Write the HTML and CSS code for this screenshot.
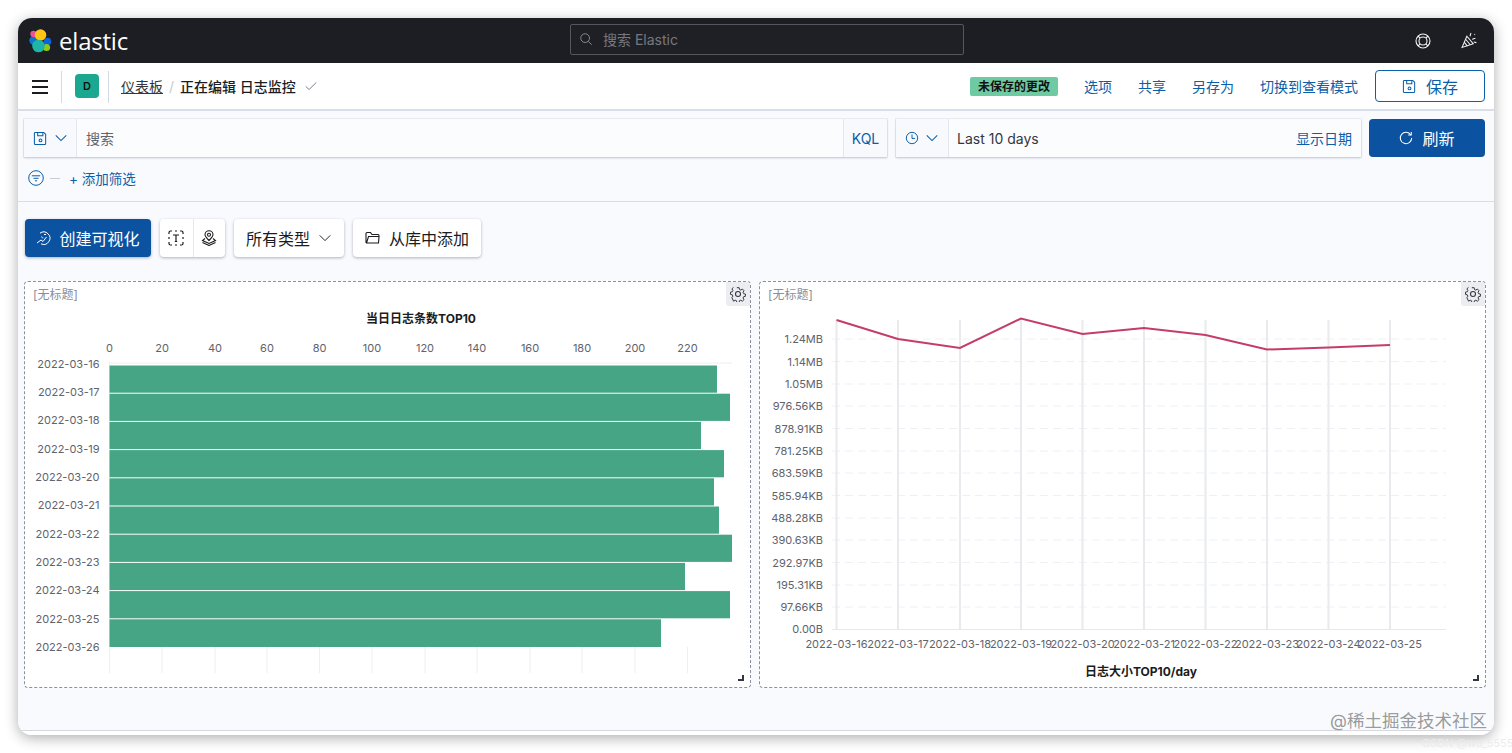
FILE: index.html
```html
<!DOCTYPE html>
<html lang="zh">
<head>
<meta charset="utf-8">
<title>日志监控 - Elastic</title>
<link rel="stylesheet" href="styles.css">
</head>
<body>
<div class="window">
  <header class="topbar">
    <div class="brand">
      <svg class="logo" viewBox="0 0 24 24" width="24" height="24">
        <circle cx="5.5" cy="11.5" r="4.2" fill="#0b77c9"/>
        <circle cx="5.5" cy="5" r="3.2" fill="#ee4f9a"/>
        <circle cx="19.5" cy="12.5" r="3.8" fill="#0b64dd"/>
        <circle cx="18.5" cy="18.5" r="3.6" fill="#93c90e"/>
        <circle cx="12.5" cy="6" r="5.8" fill="#fec514"/>
        <circle cx="10.5" cy="17" r="6.3" fill="#1eb5a6"/>
      </svg>
      <span class="wordmark">elastic</span>
    </div>
    <div class="globalsearch">
      <svg class="ic" viewBox="0 0 16 16" width="14" height="14"><circle cx="7" cy="7" r="5" fill="none" stroke="#8a8b90" stroke-width="1.1"/><path d="M10.7 10.7l3.8 3.8" stroke="#8a8b90" stroke-width="1.1"/></svg>
      <span>搜索 Elastic</span>
    </div>
    <div class="topicons">
      <svg viewBox="0 0 16 16" width="16" height="16" fill="none" stroke="#f2f2f2" stroke-width="1.1"><circle cx="8" cy="8" r="7"/><circle cx="8" cy="8" r="4"/><path d="M3 3l2.2 2.2M13 3l-2.2 2.2M3 13l2.2-2.2M13 13l-2.2-2.2"/></svg>
      <svg viewBox="0 0 16 16" width="17" height="17" fill="none" stroke="#f2f2f2" stroke-width="1"><path d="M1 14.5L5.5 4l6 7z"/><path d="M3 9.5l3 3.8M4.3 6.8l4.4 5.2"/><path d="M8.5 4c.4-1 .2-1.800 1-3M10.500 7c1-.8 2-.8 3-1.200M12 9.500l2.500.5M12.500 2l.8.5"/></svg>
    </div>
  </header>

  <nav class="navbar">
    <button class="burger" aria-label="menu"><i></i><i></i><i></i></button>
    <div class="spacecell"><span class="avatar">D</span></div>
    <div class="crumbs">
      <a class="crumb-link">仪表板</a><span class="slash">/</span><strong>正在编辑 日志监控</strong>
      <svg viewBox="0 0 16 16" width="14" height="14" fill="none" stroke="#69707d" stroke-width="1"><path d="M2 8.500l3.800 3.500L14 4"/></svg>
    </div>
    <div class="navactions">
      <span class="badge">未保存的更改</span>
      <a>选项</a><a>共享</a><a>另存为</a><a>切换到查看模式</a>
      <button class="savebtn">
        <svg viewBox="0 0 16 16" width="15" height="15" fill="none" stroke="#0b5ea8" stroke-width="1.100"><path d="M2.500 1.500h9l2 2v10a1 1 0 0 1-1 1h-10a1 1 0 0 1-1-1v-11a1 1 0 0 1 1-1z"/><path d="M5 1.500v3.500h5.500v-3.500"/><circle cx="8" cy="10" r="1.500"/></svg>
        保存
      </button>
    </div>
  </nav>

  <main class="main">
    <section class="querysec">
      <div class="queryrow">
        <div class="field querybar">
          <div class="prefix">
            <svg viewBox="0 0 16 16" width="15" height="15" fill="none" stroke="#0b5ea8" stroke-width="1.100"><path d="M2.500 1.500h9l2 2v10a1 1 0 0 1-1 1h-10a1 1 0 0 1-1-1v-11a1 1 0 0 1 1-1z"/><path d="M5 1.500v3.500h5.500v-3.500"/><circle cx="8" cy="10" r="1.500"/></svg>
            <svg viewBox="0 0 16 16" width="14" height="14" fill="none" stroke="#0b5ea8" stroke-width="1.200"><path d="M2 5l6 6 6-6"/></svg>
          </div>
          <div class="queryinput">搜索</div>
          <div class="kql">KQL</div>
        </div>
        <div class="field timebar">
          <div class="prefix">
            <svg viewBox="0 0 16 16" width="14" height="14" fill="none" stroke="#0b5ea8" stroke-width="1.100"><circle cx="8" cy="8" r="6.500"/><path d="M8 4v4.500h3.500"/></svg>
            <svg viewBox="0 0 16 16" width="14" height="14" fill="none" stroke="#0b5ea8" stroke-width="1.200"><path d="M2 5l6 6 6-6"/></svg>
          </div>
          <div class="timeval">Last 10 days</div>
          <a class="showdates">显示日期</a>
        </div>
        <button class="refresh">
          <svg viewBox="0 0 16 16" width="14" height="14" fill="none" stroke="#fff" stroke-width="1.200"><path d="M13.500 4.500A6.500 6.500 0 1 0 14.500 8"/><path d="M10.500 4.500h3.500v-3.500"/></svg>
          刷新
        </button>
      </div>
      <div class="filterrow">
        <svg viewBox="0 0 16 16" width="16" height="16" fill="none" stroke="#0b5ea8" stroke-width="1"><circle cx="8" cy="8" r="7.300"/><path d="M3.800 5.800h8.400M5.500 8.300h5M7 10.800h2"/></svg>
        <span class="dash"></span>
        <a>+ 添加筛选</a>
      </div>
    </section>

    <section class="toolbar">
      <button class="btn primary">
        <svg viewBox="0 0 16 16" width="16" height="16" fill="none" stroke="#fff" stroke-width="1"><path d="M4 3.200A6.200 6.200 0 1 1 5 13.800"/><path d="M1 13l4-3 2 1.500 3.500-4.500"/><path d="M5.500 6.500c.3 1 1 1.500 1.800 1.500M8 4.500l2 0"/></svg>
        创建可视化
      </button>
      <div class="btngroup">
        <span class="cell">
          <svg viewBox="0 0 16 16" width="16" height="16" fill="none" stroke="#1a1c21" stroke-width="1.200"><path d="M1 4V2.500A1.500 1.500 0 0 1 2.500 1H4M12 1h1.500A1.500 1.500 0 0 1 15 2.500V4M15 12v1.500a1.500 1.500 0 0 1-1.500 1.500H12M4 15H2.500A1.500 1.500 0 0 1 1 13.500V12M1 7v2M15 7v2M7 1h2M7 15h2"/><path d="M5 5h6M8 5v6.500M6.800 11.500h2.400"/></svg>
        </span>
        <span class="cell">
          <svg viewBox="0 0 16 16" width="16" height="16" fill="none" stroke="#1a1c21" stroke-width="1.100"><path d="M8 10.500C5.500 8 4 6.500 4 4.800a4 4 0 0 1 8 0c0 1.700-1.500 3.200-4 5.700z"/><circle cx="8" cy="4.800" r="1.500"/><path d="M4 8.500l-2.500 2L8 13.500l6.500-3-2.500-2M1.500 12.500L8 15.500l6.500-3"/></svg>
        </span>
      </div>
      <button class="btn">所有类型
        <svg viewBox="0 0 16 16" width="14" height="14" fill="none" stroke="#1a1c21" stroke-width="1.100"><path d="M2 5l6 6 6-6"/></svg>
      </button>
      <button class="btn">
        <svg viewBox="0 0 16 16" width="16" height="16" fill="none" stroke="#1a1c21" stroke-width="1.100"><path d="M1 13V3.500a1 1 0 0 1 1-1h3.500l1.500 2h6a1 1 0 0 1 1 1v1.500M1 13h12.500l.5-6.500H3.500L1.500 13"/></svg>
        从库中添加
      </button>
    </section>

    <section class="panels">
      <article class="panel">
        <div class="paneltitle">[无标题]</div>
        <span class="gear"><svg viewBox="0 0 16 16" width="16" height="16" fill="none" stroke="#343741" stroke-width="1.100"><circle cx="8" cy="8" r="2.500"/><path d="M6.700 1h2.600l.4 2 1.400.6 1.800-1.100 1.800 1.900-1.100 1.700.6 1.500 2 .4v2.600l-2 .4-.6 1.400 1.100 1.800-1.900 1.800-1.700-1.100-1.500.6-.4 2H6.700l-.4-2-1.400-.6-1.800 1.100L1.200 12.100l1.100-1.700-.6-1.500-2-.4V5.900l2-.4.600-1.400-1.100-1.800L3 .6" transform="translate(.8 .8) scale(.9)"/></svg></span>
        <svg class="chart" viewBox="25 307 725 380">
          <text class="ctitle" x="421" y="323" text-anchor="middle">当日日志条数TOP10</text>
          <g class="vgrid">
            <path d="M109.500 362v311M162 647v26M215 647v26M267 647v26M319.500 647v26M372 647v26M425 647v26M477 647v26M530 647v26M582 647v26M635 647v26M687.500 647v26M109.500 363H732"/>
          </g>
          <g class="axis" text-anchor="middle">
            <text x="109.500" y="352">0</text><text x="162" y="352">20</text><text x="215" y="352">40</text><text x="267" y="352">60</text><text x="319.500" y="352">80</text><text x="372" y="352">100</text><text x="425" y="352">120</text><text x="477" y="352">140</text><text x="530" y="352">160</text><text x="582" y="352">180</text><text x="635" y="352">200</text><text x="687.500" y="352">220</text>
          </g>
          <g class="axis" text-anchor="end">
            <text x="99.500" y="368">2022-03-16</text><text x="99.500" y="396">2022-03-17</text><text x="99.500" y="424">2022-03-18</text><text x="99.500" y="453">2022-03-19</text><text x="99.500" y="481">2022-03-20</text><text x="99.500" y="509">2022-03-21</text><text x="99.500" y="538">2022-03-22</text><text x="99.500" y="566">2022-03-23</text><text x="99.500" y="594">2022-03-24</text><text x="99.500" y="622.500">2022-03-25</text><text x="99.500" y="650.500">2022-03-26</text>
          </g>
          <g class="bars">
            <rect x="109.500" y="365.500" width="607.500" height="27.200"/>
            <rect x="109.500" y="393.700" width="620.500" height="27.200"/>
            <rect x="109.500" y="421.900" width="591.500" height="27.200"/>
            <rect x="109.500" y="450.100" width="614.500" height="27.200"/>
            <rect x="109.500" y="478.300" width="604.500" height="27.200"/>
            <rect x="109.500" y="506.500" width="609.500" height="27.200"/>
            <rect x="109.500" y="534.700" width="622.500" height="27.200"/>
            <rect x="109.500" y="562.900" width="575.500" height="27.200"/>
            <rect x="109.500" y="591.100" width="620.500" height="27.200"/>
            <rect x="109.500" y="619.300" width="551.500" height="27.700"/>
          </g>
        </svg>
        <span class="resize"></span>
      </article>

      <article class="panel">
        <div class="paneltitle">[无标题]</div>
        <span class="gear"><svg viewBox="0 0 16 16" width="16" height="16" fill="none" stroke="#343741" stroke-width="1.100"><circle cx="8" cy="8" r="2.500"/><path d="M6.700 1h2.600l.4 2 1.400.6 1.800-1.100 1.800 1.900-1.100 1.700.6 1.500 2 .4v2.600l-2 .4-.6 1.400 1.100 1.800-1.900 1.800-1.700-1.100-1.500.6-.4 2H6.700l-.4-2-1.400-.6-1.800 1.100L1.200 12.100l1.100-1.700-.6-1.500-2-.4V5.900l2-.4.600-1.400-1.100-1.800L3 .6" transform="translate(.8 .8) scale(.9)"/></svg></span>
        <svg class="chart" viewBox="760 307 725 380">
          <g class="hgrid">
            <path d="M832 339H1446M832 361.500H1446M832 384H1446M832 406H1446M832 428.500H1446M832 451H1446M832 473H1446M832 495.500H1446M832 518H1446M832 540H1446M832 562.500H1446M832 585H1446M832 607H1446"/>
          </g>
          <g class="vlines">
            <path d="M836.500 320V629M898 320V629M960 320V629M1021 320V629M1082.500 320V629M1144 320V629M1205.500 320V629M1267 320V629M1328.500 320V629M1390 320V629"/>
          </g>
          <path class="baseline" d="M832 629.500H1446"/>
          <polyline class="line" points="836.500,320 898,339 960,348 1021,318.500 1082.500,334 1144,328 1205.500,335 1267,349.500 1328.500,347.500 1390,345"/>
          <g class="axis" text-anchor="end">
            <text x="823" y="343">1.24MB</text><text x="823" y="365.500">1.14MB</text><text x="823" y="388">1.05MB</text><text x="823" y="410">976.56KB</text><text x="823" y="432.500">878.91KB</text><text x="823" y="455">781.25KB</text><text x="823" y="477">683.59KB</text><text x="823" y="499.500">585.94KB</text><text x="823" y="522">488.28KB</text><text x="823" y="544">390.63KB</text><text x="823" y="566.500">292.97KB</text><text x="823" y="589">195.31KB</text><text x="823" y="611">97.66KB</text><text x="823" y="633">0.00B</text>
          </g>
          <g class="axis" text-anchor="middle">
            <text x="836.500" y="648">2022-03-16</text><text x="898" y="648">2022-03-17</text><text x="960" y="648">2022-03-18</text><text x="1021" y="648">2022-03-19</text><text x="1082.500" y="648">2022-03-20</text><text x="1144" y="648">2022-03-21</text><text x="1205.500" y="648">2022-03-22</text><text x="1267" y="648">2022-03-23</text><text x="1328.500" y="648">2022-03-24</text><text x="1390" y="648">2022-03-25</text>
          </g>
          <text class="ctitle" x="1141" y="676" text-anchor="middle">日志大小TOP10/day</text>
        </svg>
        <span class="resize"></span>
      </article>
    </section>
  </main>
  <div class="bottomstrip"></div>
</div>
<div class="watermark">@稀土掘金技术社区</div>
<div class="csdn">CSDN @wu_55555</div>
</body>
</html>
```

FILE: styles.css
```css
* { box-sizing: border-box; }
html, body { margin: 0; height: 753px; overflow: hidden; background: #fff; }
body {
  padding: 18px;
  font-family: Inter, "Noto Sans CJK SC", sans-serif;
  color: #343741;
  position: relative;
}
a { color: #0b5ea8; text-decoration: none; }
button { font-family: inherit; cursor: pointer; }
svg { display: block; flex: none; }

.window {
  height: 717px;
  border-radius: 14px;
  overflow: hidden;
  display: flex;
  flex-direction: column;
  background: #fff;
  box-shadow: 0 3px 14px rgba(0,0,0,.32);
}

.topbar {
  height: 45px;
  flex: none;
  background: #1d1e24;
  display: flex;
  align-items: center;
  position: relative;
  padding: 0 16px 0 10px;
}
.brand { display: flex; align-items: center; gap: 7px; width: 542px; }
.wordmark { font-family: "Open Sans", sans-serif; color: #fff; font-size: 24px; line-height: 1; letter-spacing: -.2px; }
.globalsearch {
  width: 394px;
  height: 31px;
  margin-top: -3px;
  border: 1px solid #56575c;
  border-radius: 2px;
  background: #1f2026;
  display: flex;
  align-items: center;
  gap: 10px;
  padding-left: 8px;
  color: #77787e;
  font-size: 14px;
}
.topicons { margin-left: auto; display: flex; align-items: center; gap: 30px; }

.navbar {
  height: 48px;
  flex: none;
  background: #fff;
  display: flex;
  align-items: center;
  border-bottom: 2px solid #d9dee8;
  font-size: 14px;
}
.burger {
  width: 44px;
  height: 32px;
  background: none;
  border: 0;
  border-right: 1px solid #d3dae6;
  display: flex;
  flex-direction: column;
  align-items: center;
  justify-content: center;
  gap: 4px;
  padding: 0;
  margin-top: 8px;
  align-self: flex-start;
}
.burger i { width: 16px; height: 2px; background: #1a1c21; display: block; }
.spacecell {
  width: 47px;
  height: 32px;
  margin-top: 8px;
  align-self: flex-start;
  border-right: 1px solid #d3dae6;
  padding: 4px 0 0 13px;
}
.avatar {
  width: 24px;
  height: 24px;
  border-radius: 4px;
  background: #1ba891;
  color: #111;
  font-size: 11px;
  font-weight: 600;
  display: flex;
  align-items: center;
  justify-content: center;
  margin-top: -1px;
}
.crumbs { display: flex; align-items: center; padding-left: 12px; color: #1a1c21; }
.crumb-link { color: #343741; text-decoration: underline; }
.slash { color: #c5cbd6; margin: 0 6px; }
.crumbs strong { font-weight: 500; }
.crumbs svg { margin-left: 8px; }
.navactions { margin-left: auto; display: flex; align-items: center; padding-right: 9px; }
.navactions a { margin-left: 26px; color: #0b5ea8; }
.badge {
  background: #6dcaa3;
  color: #111;
  font-size: 12px;
  font-weight: 600;
  height: 19px;
  line-height: 19px;
  width: 88px;
  text-align: center;
  border-radius: 2px;
}
.savebtn {
  margin-left: 17px;
  width: 110px;
  height: 32px;
  border: 1px solid #0b5ea8;
  border-radius: 4px;
  background: #fff;
  color: #0b5ea8;
  font-size: 16px;
  display: flex;
  align-items: center;
  justify-content: center;
  gap: 9px;
  padding: 0;
}

.main {
  flex: 1;
  background: #f8fafd;
  display: flex;
  flex-direction: column;
  min-height: 0;
}
.querysec { height: 91px; flex: none; border-bottom: 1px solid #d9dde5; padding: 8px 9px 0 6px; }
.queryrow { display: flex; height: 38px; }
.field {
  display: flex;
  align-items: center;
  background: #fbfcfe;
  box-shadow: 0 1px 2px rgba(70,90,130,.28), 0 0 0 1px rgba(210,218,230,.35);
  font-size: 14px;
}
.querybar { width: 863px; }
.timebar { width: 465px; margin-left: 9px; }
.prefix {
  width: 53px;
  height: 100%;
  flex: none;
  display: flex;
  align-items: center;
  justify-content: center;
  gap: 6px;
  border-right: 1px solid #e3e7ef;
  background: #f7f9fc;
}
.queryinput { flex: 1; padding-left: 9px; color: #5f6570; }
.kql { width: 44px; height: 100%; display: flex; align-items: center; justify-content: center; border-left: 1px solid #e3e7ef; color: #0b5ea8; background: #f7f9fc; }
.timeval { flex: 1; padding-left: 8px; color: #343741; }
.showdates { padding-right: 9px; }
.refresh {
  width: 116px;
  margin-left: 8px;
  border: 0;
  border-radius: 4px;
  background: #0b53a1;
  color: #fff;
  font-size: 16px;
  display: flex;
  align-items: center;
  justify-content: center;
  gap: 9px;
  padding: 0;
}
.filterrow { display: flex; align-items: center; height: 26px; margin-top: 8px; padding-left: 4px; font-size: 13.500px; }
.dash { width: 10px; height: 1px; background: #c5cbd6; margin: 0 9px 0 6px; }

.toolbar { display: flex; height: 38px; flex: none; margin: 17px 0 0 7px; gap: 9px; }
.btn, .btngroup {
  height: 38px;
  border-radius: 4px;
  background: #fff;
  box-shadow: 0 1px 3px rgba(60,70,90,.4);
}
.btn {
  border: 0;
  font-size: 16px;
  color: #1a1c21;
  padding: 0 12px;
  display: flex;
  align-items: center;
  gap: 8px;
}
.btn.primary { background: #0b53a1; color: #fff; width: 126px; justify-content: center; gap: 7px; padding: 0; }
.btngroup { display: flex; }
.cell { width: 32.500px; display: flex; align-items: center; justify-content: center; }
.cell + .cell { border-left: 1px solid #e3e7ef; }

.panels { display: grid; grid-template-columns: 727px 727px; gap: 8px; margin: 24px 0 0 6px; flex: none; }
.panel {
  height: 407px;
  background: #fff;
  border: 1px dashed #8b90a0;
  border-radius: 4px;
  position: relative;
}
.paneltitle { height: 25px; padding: 5px 0 0 8px; font-size: 12px; line-height: 16px; color: #8a8f9c; }
.chart { width: 725px; height: 380px; }
.gear {
  position: absolute;
  top: 0;
  right: 0;
  width: 24px;
  height: 24px;
  background: #ebedf1;
  border-radius: 0 3px 0 3px;
  display: flex;
  align-items: center;
  justify-content: center;
}
.resize {
  position: absolute;
  right: 6px;
  bottom: 6px;
  width: 6px;
  height: 6px;
  border-right: 2px solid #343741;
  border-bottom: 2px solid #343741;
}
.ctitle { font-size: 12px; font-weight: 700; fill: #1a1c21; }
.axis text { font-size: 11px; fill: #5e636d; }
.vgrid path { stroke: #eceef2; fill: none; }
.bars rect { fill: #45a585; }
.hgrid path { stroke: #eef0f3; stroke-dasharray: 8 5; fill: none; }
.vlines path { stroke: #e8eaed; stroke-width: 2; fill: none; }
.baseline { stroke: #e6e8ec; fill: none; }
.line { fill: none; stroke: #c43d68; stroke-width: 2; }
.bottomstrip { height: 5px; flex: none; background: #fff; border-top: 1px solid #d5d8de; }

.watermark {
  position: absolute;
  left: 1330px;
  top: 709px;
  font-size: 17.500px;
  line-height: 24px;
  color: rgba(90,90,90,.62);
  white-space: nowrap;
}
.csdn {
  position: absolute;
  left: 1422px;
  top: 736px;
  font-size: 11px;
  line-height: 14px;
  color: #ececec;
  white-space: nowrap;
}
```
